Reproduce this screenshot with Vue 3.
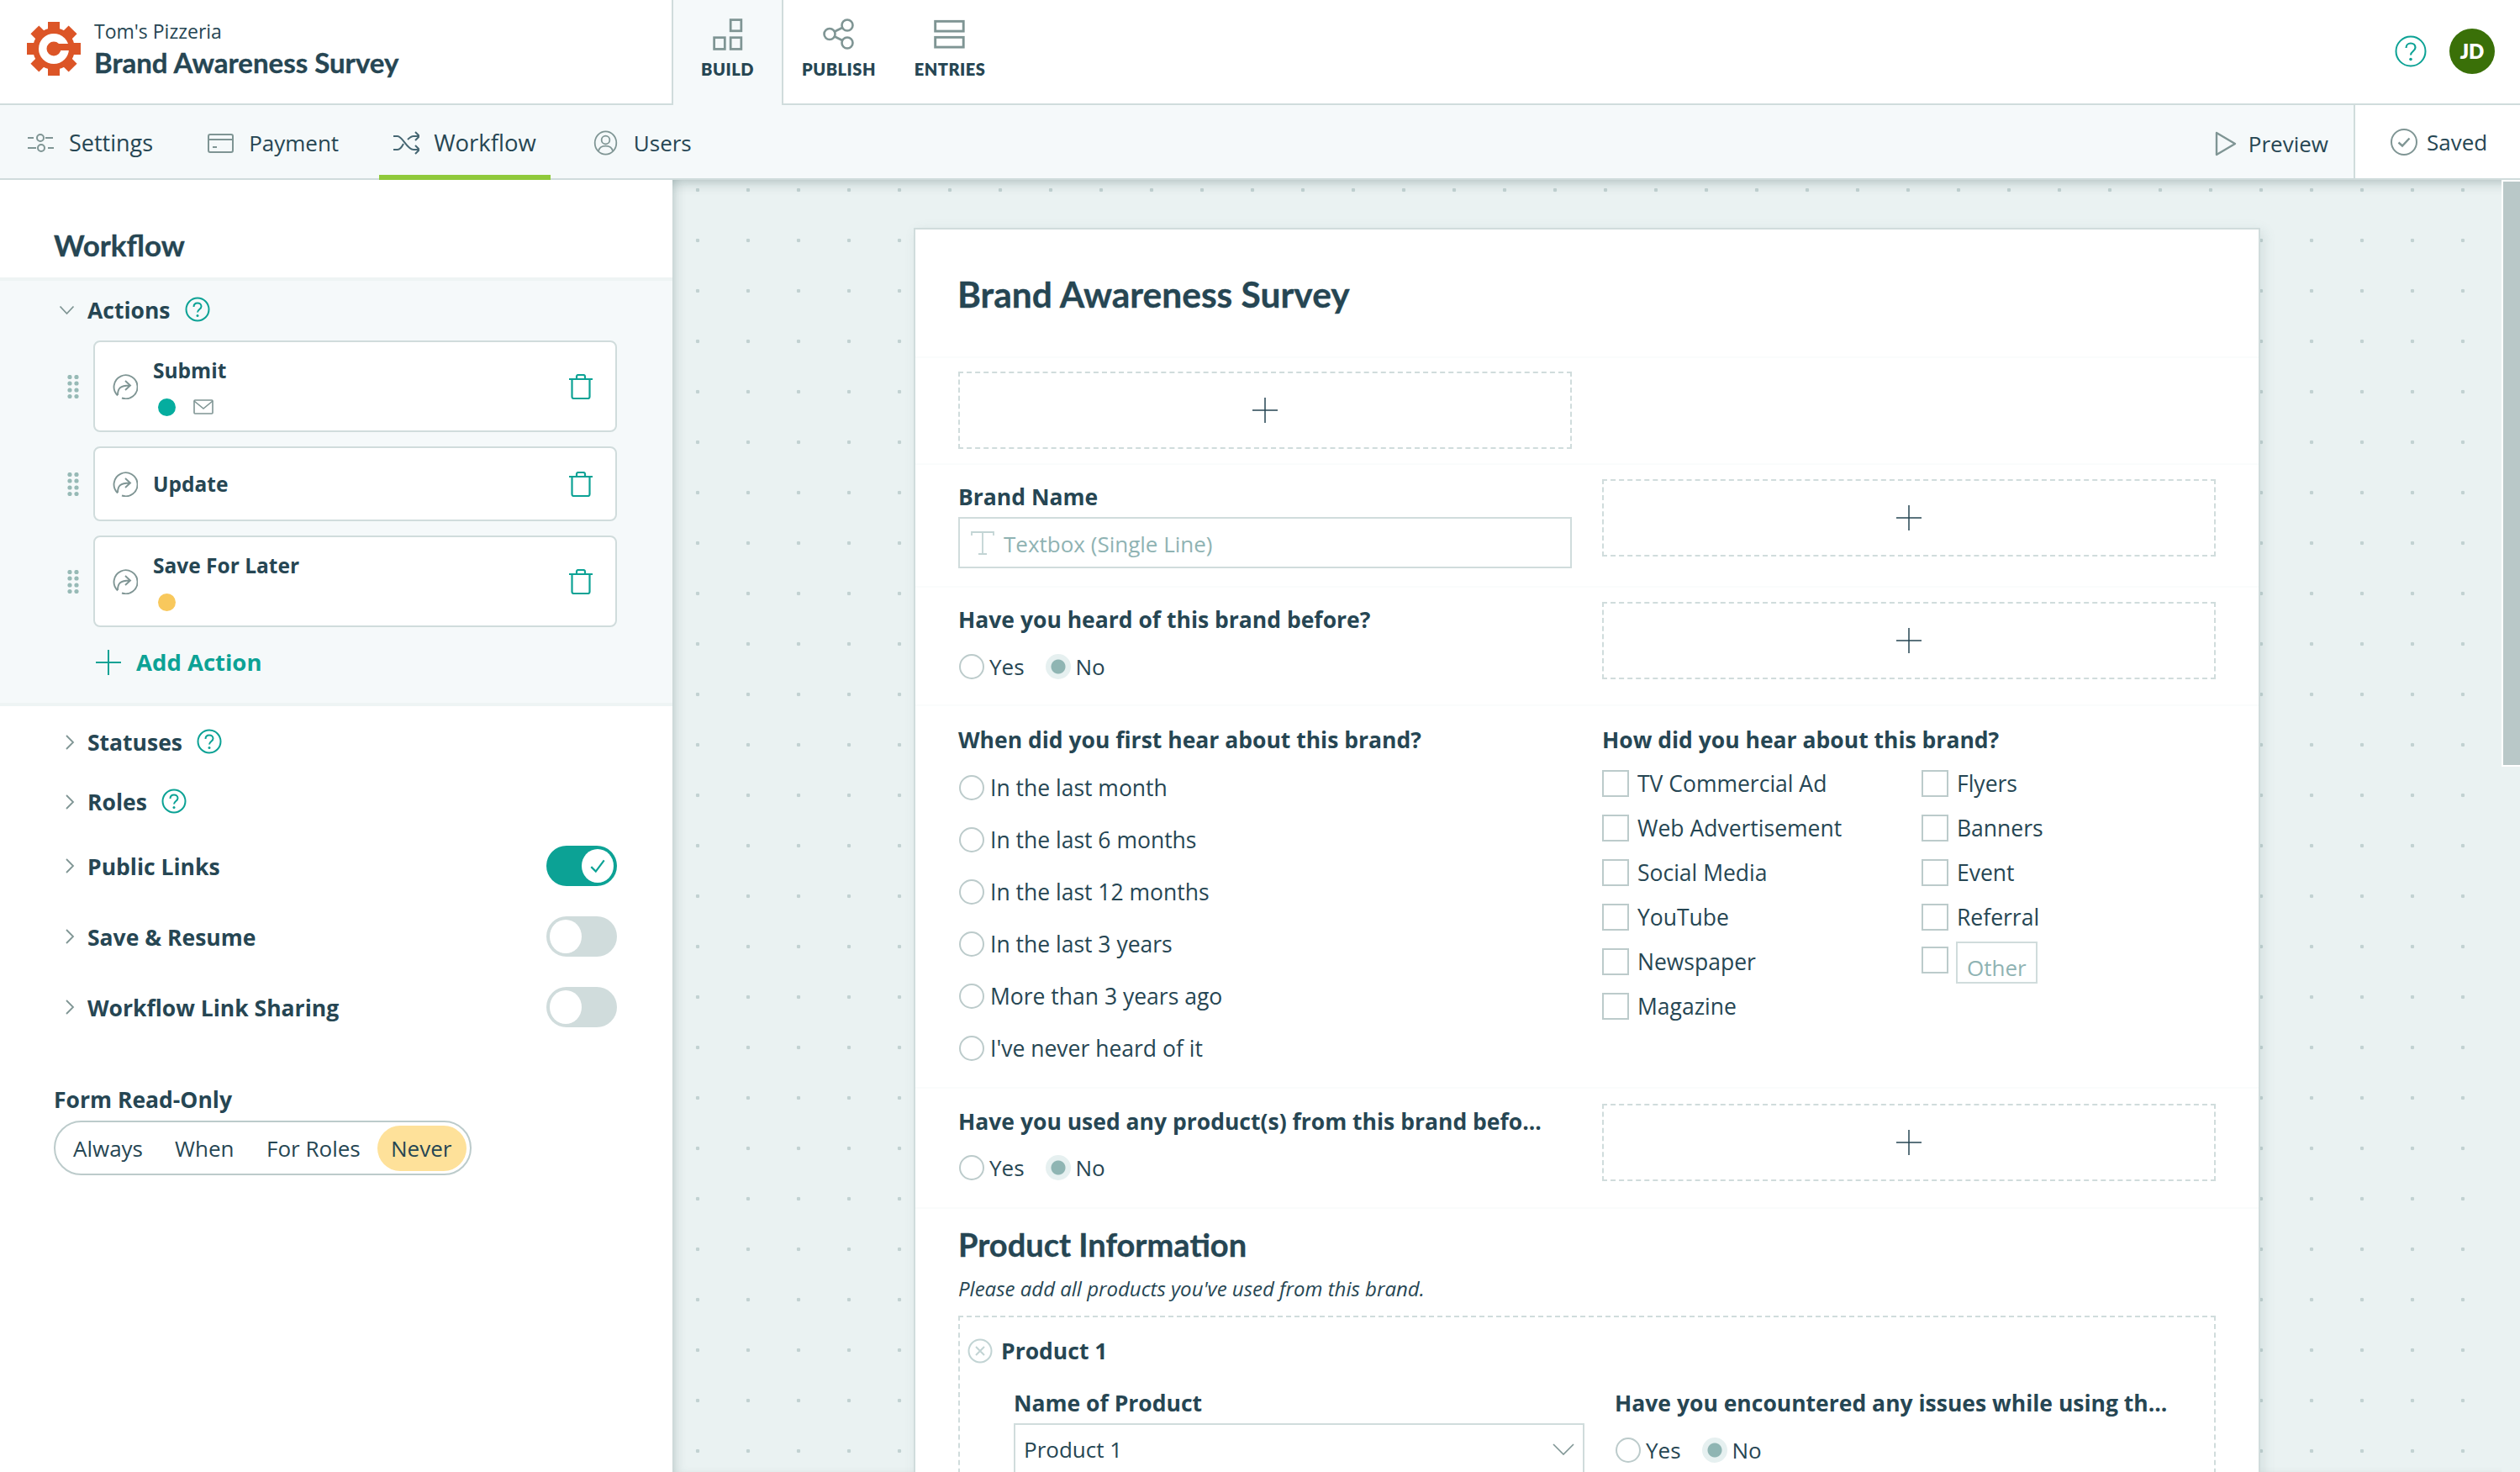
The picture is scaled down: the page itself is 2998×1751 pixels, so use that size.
<script setup>
const teeth = [0, 45, 90, 135, 180, 225, 270, 315]
const navItems = ['Settings', 'Payment', 'Workflow', 'Users']
const actions = [
  { name: 'Submit', dot: 'teal', mail: true, cls: 'tall' },
  { name: 'Update', cls: 'short' },
  { name: 'Save For Later', dot: 'amber', cls: 'tall' }
]
const when = ['In the last month', 'In the last 6 months', 'In the last 12 months', 'In the last 3 years', 'More than 3 years ago', "I've never heard of it"]
const col1 = ['TV Commercial Ad', 'Web Advertisement', 'Social Media', 'YouTube', 'Newspaper', 'Magazine']
const col2 = ['Flyers', 'Banners', 'Event', 'Referral']
</script>

<template>
  <div class="app">
    <header class="top">
      <div class="brand">
        <svg class="logo" viewBox="0 0 64 64" aria-hidden="true">
          <rect v-for="t in teeth" :key="t" x="25" y="0" width="14" height="14" fill="#dc5527" :transform="`rotate(${t} 32 32)`" />
          <circle cx="32" cy="32" r="25" fill="#dc5527" />
          <circle cx="32" cy="32" r="18" fill="#fff" />
          <circle cx="32" cy="32" r="8.5" fill="#dc5527" />
          <path d="M32 26h20v8H32z" fill="#dc5527" />
        </svg>
        <div class="brand-text">
          <div class="org">Tom's Pizzeria</div>
          <div class="survey">Brand Awareness Survey</div>
        </div>
      </div>
      <div class="mode active mode-build">
        <svg class="mode-icon" viewBox="0 0 34 36" fill="none" stroke="#7f9594" stroke-width="2.6"><rect x="20" y="1.5" width="12" height="12.5"/><rect x="1.5" y="21.5" width="12" height="13"/><rect x="20" y="21.5" width="12" height="13"/></svg>
        <span>BUILD</span>
      </div>
      <div class="mode">
        <svg class="mode-icon" viewBox="0 0 38 38" fill="none" stroke="#7f9594" stroke-width="2.6"><circle cx="29" cy="8" r="6.5"/><circle cx="8" cy="18.5" r="6.5"/><circle cx="29" cy="29" r="6.5"/><path d="M14 15.5 23 11M14 21.5l9 4.5"/></svg>
        <span>PUBLISH</span>
      </div>
      <div class="mode">
        <svg class="mode-icon" viewBox="0 0 34 34" fill="none" stroke="#7f9594" stroke-width="2.6"><rect x="1.5" y="3" width="30" height="10.5"/><rect x="1.5" y="20" width="30" height="10.5"/></svg>
        <span>ENTRIES</span>
      </div>
      <div class="top-fill">
        <svg class="top-help" viewBox="0 0 38 38" fill="none" stroke="#0ca295" stroke-width="2"><circle cx="19" cy="19" r="17.5"/><path d="M13.5 15c0-3.400 2.500-5.500 5.500-5.500s5.500 2.100 5.500 5c0 4.500-5.500 4.500-5.500 9" stroke-width="2.2"/><circle cx="19" cy="28.500" r="1.800" fill="#0ca295" stroke="none"/></svg>
        <div class="avatar">JD</div>
      </div>
    </header>

    <nav class="subnav">
      <div v-for="n in navItems" :key="n" class="nav-item" :class="[n.toLowerCase(), { on: n === 'Workflow' }]">
        <svg v-if="n === 'Settings'" class="nav-icon" viewBox="0 0 31 30" fill="none" stroke="#7f9594" stroke-width="2"><path d="M0 9h7M21 9h9M10 21H0M24 21h7"/><circle cx="15" cy="9" r="4"/><circle cx="16" cy="21" r="4"/></svg>
        <svg v-else-if="n === 'Payment'" class="nav-icon" viewBox="0 0 31 30" fill="none" stroke="#7f9594" stroke-width="2"><rect x="1" y="5" width="29" height="21" rx="2"/><path d="M1 11h29M6 20h5"/></svg>
        <svg v-else-if="n === 'Workflow'" class="nav-icon" viewBox="0 0 31 30" fill="none" stroke="#456672" stroke-width="2"><path d="M0 7h5c6 0 11 16 19 16h6M0 23h5c3 0 5-3 7-7M17 11c2-2 4-4 7-4h6"/><path d="M26 2l5 5-5 5M26 18l5 5-5 5"/></svg>
        <svg v-else class="nav-icon" viewBox="0 0 31 34" fill="none" stroke="#7f9594" stroke-width="2"><ellipse cx="15.500" cy="17" rx="14.500" ry="15.500"/><circle cx="15.500" cy="13" r="5.500"/><path d="M6 28c1-6 5-7 9.500-7s8.500 1 9.500 7"/></svg>
        <span>{{ n }}</span>
      </div>
      <div class="nav-fill"></div>
      <div class="preview">
        <svg class="preview-icon" viewBox="0 0 26 30" fill="none" stroke="#7f9594" stroke-width="2.4" stroke-linejoin="round"><path d="M2 2l22 13L2 28z"/></svg>
        <span>Preview</span>
      </div>
      <div class="saved">
        <svg class="saved-icon" viewBox="0 0 32 32" fill="none" stroke="#7f9594" stroke-width="2"><circle cx="16" cy="16" r="15"/><path d="M9.500 16.500l4.500 4 8.500-9" stroke-width="2.400"/></svg>
        <span>Saved</span>
      </div>
    </nav>

    <main class="body">
      <aside class="side">
        <h2 class="side-title">Workflow</h2>
        <section class="actions">
          <div class="sec-head">
            <svg class="chev-down" viewBox="0 0 18 12" fill="none" stroke="#7f9594" stroke-width="1.800"><path d="M1 1.500l8 8.500 8-8.500"/></svg>
            <span class="sec-label">Actions</span>
            <svg class="help" viewBox="0 0 30 30" fill="none" stroke="#0ca295" stroke-width="2"><circle cx="15" cy="15" r="13.500"/><path d="M10.500 12c0-3 2-4.500 4.500-4.500s4.500 1.600 4.500 4c0 3.500-4.500 3.500-4.500 7"/><circle cx="15" cy="22.500" r="1.500" fill="#0ca295" stroke="none"/></svg>
          </div>
          <div v-for="a in actions" :key="a.name" class="action-row">
            <svg class="drag" viewBox="0 0 14 28" fill="#97bab6"><template v-for="y in [2.500, 10, 18, 25.500]" :key="y"><circle cx="3" :cy="y" r="2.600"/><circle cx="11" :cy="y" r="2.600"/></template></svg>
            <div class="card" :class="a.cls">
              <svg class="act-icon" viewBox="0 0 30 30" fill="none" stroke="#7f9594" stroke-width="1.900"><path d="M6 25.500A14 14 0 1 1 11 28.500"/><path d="M6 25c0-8 3-11.500 14-11.500M15 8l6 5.500-6 5.500"/></svg>
              <div class="card-main">
                <div class="card-name">{{ a.name }}</div>
                <div v-if="a.dot" class="card-meta">
                  <span class="dot" :class="a.dot"></span>
                  <svg v-if="a.mail" class="mail" viewBox="0 0 24 18" fill="none" stroke="#7f9594" stroke-width="1.600"><rect x="1" y="1" width="22" height="16" rx="1"/><path d="M1 2l11 9 11-9"/></svg>
                </div>
              </div>
              <svg class="trash" viewBox="0 0 28 30" fill="none" stroke="#0ca295" stroke-width="2.200"><path d="M0 6h28M3.500 6v21a2 2 0 0 0 2 2h17a2 2 0 0 0 2-2V6M9 6V3a2 2 0 0 1 2-2h6a2 2 0 0 1 2 2v3"/></svg>
            </div>
          </div>
          <div class="add-action">
            <svg class="add-plus" viewBox="0 0 30 30" stroke="#0ca295" stroke-width="2"><path d="M15 0v30M0 15h30"/></svg>
            <span>Add Action</span>
          </div>
        </section>

        <div class="collapsed">
          <div class="col-row">
            <svg class="chev" viewBox="0 0 12 18" fill="none" stroke="#7f9594" stroke-width="1.800"><path d="M2 1l8 8-8 8"/></svg>
            <span class="sec-label">Statuses</span>
            <svg class="help" viewBox="0 0 30 30" fill="none" stroke="#0ca295" stroke-width="2"><circle cx="15" cy="15" r="13.500"/><path d="M10.500 12c0-3 2-4.500 4.500-4.500s4.500 1.600 4.500 4c0 3.500-4.500 3.500-4.500 7"/><circle cx="15" cy="22.500" r="1.500" fill="#0ca295" stroke="none"/></svg>
          </div>
          <div class="col-row roles">
            <svg class="chev" viewBox="0 0 12 18" fill="none" stroke="#7f9594" stroke-width="1.800"><path d="M2 1l8 8-8 8"/></svg>
            <span class="sec-label">Roles</span>
            <svg class="help" viewBox="0 0 30 30" fill="none" stroke="#0ca295" stroke-width="2"><circle cx="15" cy="15" r="13.500"/><path d="M10.500 12c0-3 2-4.500 4.500-4.500s4.500 1.600 4.500 4c0 3.500-4.500 3.500-4.500 7"/><circle cx="15" cy="22.500" r="1.500" fill="#0ca295" stroke="none"/></svg>
          </div>
          <div class="tog-row first">
            <svg class="chev" viewBox="0 0 12 18" fill="none" stroke="#7f9594" stroke-width="1.800"><path d="M2 1l8 8-8 8"/></svg>
            <span class="sec-label">Public Links</span>
            <span class="toggle on"><span class="knob"><svg viewBox="0 0 20 20" fill="none" stroke="#0ca295" stroke-width="2"><path d="M3 11l5 5L17 4"/></svg></span></span>
          </div>
          <div class="tog-row">
            <svg class="chev" viewBox="0 0 12 18" fill="none" stroke="#7f9594" stroke-width="1.800"><path d="M2 1l8 8-8 8"/></svg>
            <span class="sec-label">Save &amp; Resume</span>
            <span class="toggle"><span class="knob"></span></span>
          </div>
          <div class="tog-row">
            <svg class="chev" viewBox="0 0 12 18" fill="none" stroke="#7f9594" stroke-width="1.800"><path d="M2 1l8 8-8 8"/></svg>
            <span class="sec-label">Workflow Link Sharing</span>
            <span class="toggle"><span class="knob"></span></span>
          </div>
        </div>

        <div class="readonly">
          <div class="sec-label">Form Read-Only</div>
          <div class="seg">
            <span class="seg-a">Always</span>
            <span class="seg-w">When</span>
            <span class="seg-r">For Roles</span>
            <span class="seg-n">Never</span>
          </div>
        </div>
      </aside>

      <div class="canvas">
        <div class="scroll-area">
          <div class="form">
            <h1 class="form-title">Brand Awareness Survey</h1>

            <div class="row r1">
              <div class="dz"><svg class="plus" viewBox="0 0 30 30" stroke="#264653" stroke-width="1.500"><path d="M15 0v30M0 15h30"/></svg></div>
            </div>

            <div class="row r2">
              <div class="field">
                <div class="q">Brand Name</div>
                <div class="input">
                  <svg class="t-icon" viewBox="0 0 28 28" fill="none" stroke="#c2d4d4" stroke-width="1.800"><path d="M1 5V1h26v4M14 1v26M9 27h10"/></svg>
                  <span class="ph">Textbox (Single Line)</span>
                </div>
              </div>
              <div class="dz dz-up"><svg class="plus" viewBox="0 0 30 30" stroke="#264653" stroke-width="1.500"><path d="M15 0v30M0 15h30"/></svg></div>
            </div>

            <div class="row r3">
              <div class="field">
                <div class="q">Have you heard of this brand before?</div>
                <div class="radios">
                  <label class="rd"><i class="radio"></i>Yes</label>
                  <label class="rd"><i class="radio sel"></i>No</label>
                </div>
              </div>
              <div class="dz dz-r3"><svg class="plus" viewBox="0 0 30 30" stroke="#264653" stroke-width="1.500"><path d="M15 0v30M0 15h30"/></svg></div>
            </div>

            <div class="row r4">
              <div class="field">
                <div class="q">When did you first hear about this brand?</div>
                <div class="vlist">
                  <label v-for="w in when" :key="w" class="vitem"><i class="radio"></i>{{ w }}</label>
                </div>
              </div>
              <div class="field">
                <div class="q">How did you hear about this brand?</div>
                <div class="checks">
                  <div class="check-col">
                    <label v-for="c in col1" :key="c" class="ck"><i class="box"></i>{{ c }}</label>
                  </div>
                  <div class="check-col">
                    <label v-for="c in col2" :key="c" class="ck"><i class="box"></i>{{ c }}</label>
                    <div class="ck other"><i class="box"></i><span class="other-in">Other</span></div>
                  </div>
                </div>
              </div>
            </div>

            <div class="row r5">
              <div class="field">
                <div class="q">Have you used any product(s) from this brand befo...</div>
                <div class="radios r5-radios">
                  <label class="rd"><i class="radio"></i>Yes</label>
                  <label class="rd"><i class="radio sel"></i>No</label>
                </div>
              </div>
              <div class="dz dz-r5"><svg class="plus" viewBox="0 0 30 30" stroke="#264653" stroke-width="1.500"><path d="M15 0v30M0 15h30"/></svg></div>
            </div>

            <section class="product">
              <h3 class="prod-title">Product Information</h3>
              <p class="prod-note">Please add all products you've used from this brand.</p>
              <div class="repeater">
                <div class="rep-head">
                  <svg class="rep-x" viewBox="0 0 30 30" fill="none" stroke="#c2d4d4" stroke-width="2"><circle cx="15" cy="15" r="13.500"/><path d="M10 10l10 10M20 10L10 20"/></svg>
                  <span>Product 1</span>
                </div>
                <div class="rep-grid">
                  <div>
                    <div class="q">Name of Product</div>
                    <div class="select">
                      <span>Product 1</span>
                      <svg class="sel-chev" viewBox="0 0 26 14" fill="none" stroke="#7f9594" stroke-width="1.600"><path d="M1 1l12 12L25 1"/></svg>
                    </div>
                  </div>
                  <div>
                    <div class="q">Have you encountered any issues while using th...</div>
                    <div class="radios rep-radios">
                      <label class="rd"><i class="radio"></i>Yes</label>
                      <label class="rd"><i class="radio sel"></i>No</label>
                    </div>
                  </div>
                </div>
              </div>
            </section>
          </div>
        </div>
        <div class="scrollbar"><div class="thumb"></div></div>
      </div>
    </main>
  </div>
</template>

<style>
html, body { margin: 0; padding: 0; overflow: hidden; background: #fff; }
</style>

<style scoped>
.app { width: 2998px; height: 1751px; display: flex; flex-direction: column; overflow: hidden; font-family: "Open Sans", sans-serif; color: #264653; font-size: 27px; }
.top { height: 125px; display: flex; flex: none; }
.brand { width: 801px; box-sizing: border-box; display: flex; align-items: center; padding-left: 32px; border-bottom: 2px solid #d0dcdc; border-right: 2px solid #d0dcdc; gap: 16px; }
.logo { width: 64px; height: 64px; flex: none; margin-top: -8px; }
.brand-text { margin-top: -8px; }
.org { font-size: 23px; line-height: 32px; }
.survey { font-family: Lato, sans-serif; font-weight: 700; font-size: 33px; line-height: 42px; -webkit-text-stroke: .35px #264653; }
.mode { width: 132px; box-sizing: border-box; display: flex; flex-direction: column; align-items: center; border-bottom: 2px solid #d0dcdc; font-family: Lato, sans-serif; font-weight: 800; font-size: 20px; letter-spacing: .5px; padding-top: 22px; }
.mode span { margin-top: 10px; }
.mode-build { width: 131px; background: #f5f9fa; border-bottom: none; border-right: 2px solid #d0dcdc; }
.mode-icon { width: 38px; height: 38px; }
.top-fill { flex: 1; border-bottom: 2px solid #d0dcdc; display: flex; align-items: center; justify-content: flex-end; padding-right: 30px; gap: 27px; }
.top-help { width: 38px; height: 38px; margin-top: -2px; }
.avatar { width: 54px; height: 54px; border-radius: 50%; background: #3a7008; color: #fff; font-weight: 800; font-size: 24px; display: flex; align-items: center; justify-content: center; font-family: Lato, sans-serif; margin-top: -2px; }

.subnav { height: 89px; flex: none; box-sizing: border-box; background: #f5f9fa; border-bottom: 2px solid #d0dcdc; display: flex; padding-left: 16px; position: relative; z-index: 2; }
.nav-item { display: flex; align-items: center; gap: 18px; padding: 0 17px; margin-right: 31px; box-sizing: border-box; height: 89px; }
.nav-item.payment, .nav-item.users { font-size: 26px; }
.nav-item.on { border-bottom: 6px solid #8fc93a; padding-top: 6px; font-size: 27.5px; gap: 17px; margin-right: 33px; }
.nav-icon { width: 31px; height: 30px; flex: none; }
.nav-fill { flex: 1; }
.preview { display: flex; align-items: center; gap: 14px; padding-right: 30px; margin-top: 4px; font-size: 26px; }
.preview-icon { width: 26px; height: 30px; }
.saved { width: 198px; box-sizing: border-box; background: #fff; border-left: 2px solid #d0dcdc; display: flex; align-items: center; padding-left: 42px; gap: 11px; font-size: 26px; }
.saved-icon { width: 32px; height: 32px; flex: none; }

.body { flex: 1; min-height: 0; display: flex; }
.side { width: 800px; flex: none; background: #fff; box-sizing: border-box; z-index: 1; }
.side-title { margin: 0; height: 120px; box-sizing: border-box; padding: 55px 0 0 64px; font-family: Lato, sans-serif; font-size: 35px; line-height: 44px; font-weight: 700; border-bottom: 4px solid #eef4f4; -webkit-text-stroke: .35px #264653; }
.actions { background: #f5f9fa; height: 506px; box-sizing: border-box; border-bottom: 4px solid #eef4f4; padding: 15px 0 0 70px; }
.sec-head { display: flex; align-items: center; height: 40px; margin-bottom: 16px; }
.chev-down { width: 19px; height: 12px; margin-right: 15px; }
.sec-label { font-weight: 700; font-size: 26.5px; line-height: 36px; }
.help { width: 30px; height: 30px; margin-left: 17px; flex: none; margin-top: -2px; }
.action-row { display: flex; align-items: center; margin-left: 10px; margin-bottom: 17px; }
.drag { width: 14px; height: 28px; margin-right: 17px; flex: none; }
.card { width: 623px; box-sizing: border-box; background: #fff; border: 2px solid #d0dcdc; border-radius: 8px; display: flex; align-items: center; padding: 0 27px 0 21px; }
.card.tall { height: 109px; }
.card.short { height: 89px; }
.act-icon { width: 30px; height: 30px; flex: none; }
.card-main { flex: 1; margin-left: 18px; }
.card-name { font-weight: 700; font-size: 24.5px; line-height: 34px; }
.card-meta { display: flex; align-items: center; gap: 21px; margin: 15px 0 0 6px; height: 22px; }
.dot { width: 21px; height: 21px; border-radius: 50%; }
.dot.teal { background: #05ad9f; }
.dot.amber { background: #f8c85c; }
.mail { width: 24px; height: 18px; }
.trash { width: 28px; height: 30px; flex: none; }
.add-action { display: flex; align-items: center; color: #0ca295; font-weight: 700; font-size: 27.5px; line-height: 40px; margin: 22px 0 0 44px; gap: 18px; }
.add-plus { width: 30px; height: 30px; }

.collapsed { padding: 23px 66px 0 77px; }
.col-row { display: flex; align-items: center; height: 40px; }
.roles { margin-top: 31px; }
.chev { width: 12px; height: 18px; flex: none; margin-right: 15px; }
.tog-row { display: flex; align-items: center; height: 48px; margin-top: 36px; }
.tog-row.first { margin-top: 32px; }
.tog-row .sec-label { flex: 1; padding-top: 2px; }
.toggle { width: 84px; height: 48px; border-radius: 24px; background: #d0dcdc; display: flex; align-items: center; padding: 0 4px; box-sizing: border-box; flex: none; }
.toggle.on { background: #0ca295; justify-content: flex-end; }
.knob { width: 38px; height: 40px; border-radius: 50%; background: #fff; display: flex; align-items: center; justify-content: center; }
.knob svg { width: 22px; height: 22px; }
.readonly { padding: 68px 0 0 64px; }
.seg { margin-top: 7px; width: 497px; height: 65px; box-sizing: border-box; border: 2px solid #bccbcb; border-radius: 33px; display: flex; align-items: center; font-size: 26px; padding: 0 4px 0 21px; }
.seg span { display: block; line-height: 53px; padding-top: 1px; }
.seg-a { width: 121px; }
.seg-w { width: 109px; }
.seg-r { width: 132px; }
.seg-n { width: 106px; box-sizing: border-box; background: #fee19a; border-radius: 27px; padding-left: 16px; }

.canvas { flex: 1; min-width: 0; display: flex; background-color: #eaf2f2; background-image: radial-gradient(circle at 30px 30px, #c2d2d2 0 2px, transparent 2.600px); background-size: 60px 60px; background-position: 0 -18px; box-shadow: inset 10px 0 14px -8px rgba(80, 110, 110, .3), inset 0 14px 14px -10px rgba(80, 110, 110, .3); }
.scroll-area { flex: 1; min-width: 0; overflow: hidden; display: flex; justify-content: center; padding-top: 57px; }
.form { width: 1602px; box-sizing: border-box; background: #fff; border-top: 2px solid #d0dcdc; border-left: 2px solid #d0dcdc; border-right: 2px solid #d0dcdc; box-shadow: 4px 4px 14px rgba(80, 110, 110, .14); flex: none; height: 1800px; }
.form-title { margin: 0; height: 151px; box-sizing: border-box; padding: 52px 0 0 50px; font-family: Lato, sans-serif; font-size: 42.5px; line-height: 50px; font-weight: 700; -webkit-text-stroke: .35px #264653; }
.row { display: grid; grid-template-columns: 730px 730px; column-gap: 36px; padding: 0 51px; border-top: 2px solid #fafcfc; box-sizing: border-box; }
.r1 { height: 127px; padding-top: 16px; }
.r2 { height: 146px; padding-top: 19px; }
.r3 { height: 141px; padding-top: 19px; }
.r4 { height: 455px; padding-top: 21px; }
.r5 { height: 143px; padding-top: 20px; }
.dz { height: 92px; box-sizing: border-box; border: 2px dashed #d0dcdc; display: flex; align-items: center; justify-content: center; }
.dz-up { margin-top: -2px; }
.dz-r3 { margin-top: -2px; }
.dz-r5 { margin-top: -2px; height: 92px; }
.plus { width: 30px; height: 30px; }
.q { font-weight: 700; font-size: 26.5px; line-height: 36px; white-space: nowrap; padding-top: 1px; margin-bottom: -1px; }
.input { margin-top: 7px; height: 61px; box-sizing: border-box; border: 2px solid #d0dcdc; display: flex; align-items: center; padding-left: 13px; gap: 11px; }
.t-icon { width: 28px; height: 28px; }
.ph { color: #8fb3b3; font-size: 26px; padding-top: 2px; }
.radios { display: flex; margin-top: 21px; height: 36px; align-items: center; }
.r5-radios { margin-top: 20px; }
.rd { display: flex; align-items: center; font-size: 26px; margin-right: 24px; gap: 6px; }
.radio { display: block; width: 30px; height: 30px; box-sizing: border-box; border: 2px solid #bccbcb; border-radius: 50%; flex: none; background: #fff; margin-left: 1px; }
.radio.sel { background: radial-gradient(circle, #8fb5b3 0 8px, #e6f0f0 9px); border: 2px solid #e6f0f0; }
.vlist { margin-top: 9px; }
.vitem { display: flex; align-items: center; height: 62px; font-size: 26.5px; gap: 7px; }
.checks { display: flex; margin-top: 8px; }
.check-col { width: 380px; flex: none; }
.ck { display: flex; align-items: center; height: 53px; font-size: 26.5px; gap: 10px; }
.box { display: block; width: 32px; height: 32px; box-sizing: border-box; border: 2px solid #bccbcb; background: #fff; flex: none; }
.other { align-items: flex-start; padding-top: 3px; }
.other .box { margin-top: 6px; }
.other-in { height: 50px; box-sizing: border-box; border: 2px solid #d0dcdc; color: #8fb3b3; padding: 10px 11px 0; line-height: 38px; margin-left: -1px; font-size: 26px; }
.product { border-top: 2px solid #fafcfc; padding: 17px 51px 0; }
.prod-title { margin: 0; font-family: Lato, sans-serif; font-weight: 700; font-size: 38px; line-height: 50px; -webkit-text-stroke: .35px #264653; }
.prod-note { margin: 11px 0 0; font-style: italic; font-size: 24px; line-height: 34px; }
.repeater { margin-top: 15px; border: 2px dashed #d0dcdc; padding: 20px 0 0 8px; height: 400px; box-sizing: border-box; }
.rep-head { display: flex; align-items: center; height: 40px; gap: 10px; font-weight: 700; font-size: 26.5px; }
.rep-x { width: 30px; height: 30px; margin-left: 1px; }
.rep-grid { display: grid; grid-template-columns: 679px 1fr; column-gap: 36px; margin: 23px 0 0 56px; }
.select { margin-top: 7px; height: 62px; box-sizing: border-box; border: 2px solid #d0dcdc; display: flex; align-items: center; justify-content: space-between; padding: 0 10px; font-size: 26px; }
.sel-chev { width: 26px; height: 14px; }
.rep-radios { margin-top: 21px; }
.scrollbar { width: 22px; flex: none; background: #eaf2f2; }
.thumb { margin: 2px 0 0 2px; height: 694px; background: #b9c8c8; box-shadow: 0 0 0 2px #fff; }
</style>
